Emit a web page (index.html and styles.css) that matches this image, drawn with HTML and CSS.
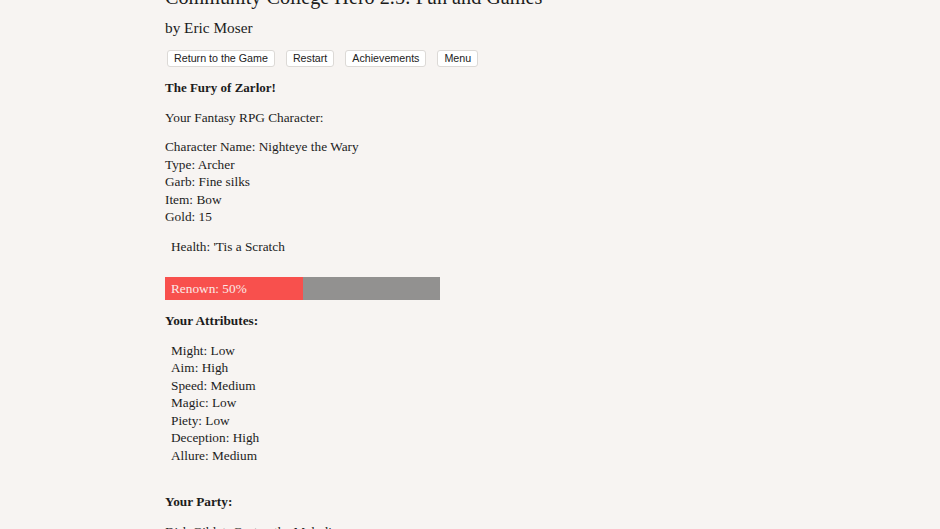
FILE: index.html
```html
<!DOCTYPE html>
<html>
<head>
<meta charset="utf-8">
<link rel="stylesheet" href="styles.css">
</head>
<body>
<div class="page">
  <h1 class="title">Community College Hero 2.5: Fun and Games</h1>
  <div class="author">by Eric Moser</div>
  <div class="buttons">
    <button class="btn">Return to the Game</button>
    <button class="btn">Restart</button>
    <button class="btn">Achievements</button>
    <button class="btn">Menu</button>
  </div>
  <p class="bold">The Fury of Zarlor!</p>
  <p>Your Fantasy RPG Character:</p>
  <p>Character Name: Nighteye the Wary<br>Type: Archer<br>Garb: Fine silks<br>Item: Bow<br>Gold: 15</p>
  <p class="indent">Health: 'Tis a Scratch</p>
  <div class="bar">
    <div class="fill" style="width: 50%"></div>
    <span class="bar-label">Renown: 50%</span>
  </div>
  <p class="bold">Your Attributes:</p>
  <p class="indent">Might: Low<br>Aim: High<br>Speed: Medium<br>Magic: Low<br>Piety: Low<br>Deception: High<br>Allure: Medium</p>
  <p class="bold party">Your Party:</p>
  <p>Dirk Giblet: Gaston the Melodious</p>
</div>
</body>
</html>
```
FILE: styles.css
```css
html, body {
  margin: 0;
  padding: 0;
  background: #f7f4f2;
  height: 100%;
  overflow: hidden;
}
.page {
  width: 610px;
  margin: -17px auto 0;
  font-family: "Liberation Serif", "Times New Roman", serif;
  font-size: 13.3px;
  line-height: 17.5px;
  color: #1c1c1c;
}
.title {
  font-size: 20.2px;
  font-weight: normal;
  margin: 0;
  line-height: 28px;
}
.author {
  font-size: 15.3px;
  line-height: 20px;
  margin-top: 7px;
}
.buttons {
  display: flex;
  gap: 11px;
  margin-top: 12px;
  padding-left: 2px;
}
.btn {
  font-family: "Liberation Sans", Arial, sans-serif;
  font-size: 10.7px;
  line-height: 13px;
  background: #ffffff;
  color: #222;
  border: 1px solid #dcd9d6;
  border-radius: 3px;
  padding: 1px 6px;
  margin: 0;
}
p {
  margin: 12px 0 0;
}
.bold {
  font-weight: bold;
}
.buttons + .bold {
  margin-top: 12px;
  font-size: 13px;
}
.indent {
  padding-left: 6px;
}
.bar {
  position: relative;
  width: 275px;
  height: 23px;
  background: #929190;
  margin-top: 22px;
}
.fill {
  height: 100%;
  background: #f8504d;
}
.bar-label {
  position: absolute;
  left: 6px;
  top: 3px;
  color: #fbe9e6;
}
.bar + .bold {
  margin-top: 12px;
}
.party {
  margin-top: 29px;
}
```
